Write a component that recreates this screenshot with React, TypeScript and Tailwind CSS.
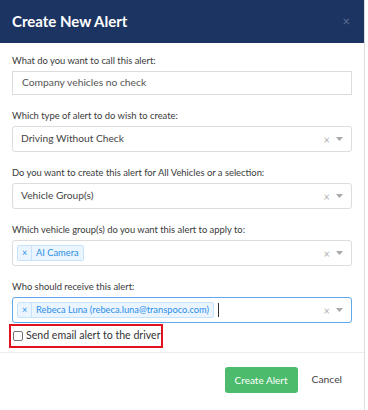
import type { ReactNode } from "react";

const font = { fontFamily: 'Lato, "Noto Sans", sans-serif' };

const Label = ({ children }: { children: ReactNode }) => (
  <div className="mb-[3px] text-[9.4px] leading-[14px] text-[#3a3a3a]">{children}</div>
);

const Caret = () => (
  <div className="flex items-center gap-[6px]">
    <span className="text-[11px] leading-none text-[#b3b3b3]">×</span>
    <svg width="7" height="4" viewBox="0 0 7 4">
      <path d="M0 0h7L3.5 4z" fill="#a8a8a8" />
    </svg>
  </div>
);

const Tag = ({ children }: { children: ReactNode }) => (
  <div className="flex h-[16px] items-stretch rounded-[2px] border border-[#c7e2fb] bg-[#ebf5ff] text-[9.3px] text-[#2a8ee8]">
    <span className="flex w-[14px] items-center justify-center border-r border-[#c7e2fb] text-[9px]">×</span>
    <span className="flex items-center px-[4px] leading-none">{children}</span>
  </div>
);

const SelectBox = ({ children, focused }: { children: ReactNode; focused?: boolean }) => (
  <div
    className={`flex h-[26px] items-center justify-between rounded-[3px] border pl-[4px] pr-[8px] ${
      focused ? "border-[#5fa8ee]" : "border-[#dcdcdc]"
    }`}
  >
    <div className="flex items-center">{children}</div>
    <Caret />
  </div>
);

export default function App() {
  return (
    <div className="h-[410px] w-[368px] bg-white" style={font}>
      <div className="flex h-[410px] w-[365px] flex-col border-r border-[#dedede]">
        <div className="flex h-[43px] items-center justify-between bg-[#1c3461] pl-[12px] pr-[14px]">
          <span className="text-[15px] font-bold text-white">Create New Alert</span>
          <span className="text-[13px] text-[#5d7195]">×</span>
        </div>
        <div className="flex flex-col gap-[14px] px-[12px] pt-[11px]">
          <div>
            <Label>What do you want to call this alert:</Label>
            <div className="flex h-[24px] items-center border border-[#dcdcdc] px-[9px] text-[10.3px] text-[#555]">
              Company vehicles no check
            </div>
          </div>
          <div>
            <Label>Which type of alert to do wish to create:</Label>
            <SelectBox>
              <span className="pl-[4px] text-[10.2px] text-[#444]">Driving Without Check</span>
            </SelectBox>
          </div>
          <div>
            <Label>Do you want to create this alert for All Vehicles or a selection:</Label>
            <SelectBox>
              <span className="pl-[4px] text-[10.2px] text-[#444]">Vehicle Group(s)</span>
            </SelectBox>
          </div>
          <div>
            <Label>Which vehicle group(s) do you want this alert to apply to:</Label>
            <SelectBox>
              <Tag>AI Camera</Tag>
            </SelectBox>
          </div>
          <div>
            <Label>Who should receive this alert:</Label>
            <SelectBox focused>
              <Tag>Rebeca Luna (rebeca.luna@transpoco.com)</Tag>
              <span className="ml-[4px] h-[14px] w-px bg-[#333]" />
            </SelectBox>
          </div>
        </div>
        <div className="ml-[9px] mt-[1px] flex h-[24px] w-[154px] items-center gap-[3px] border-2 border-[#e0121d] pl-[2px]">
          <span className="h-[10px] w-[10px] shrink-0 rounded-[2px] border border-[#777] bg-white" />
          <span className="whitespace-nowrap text-[10.6px] text-[#333]">Send email alert to the driver</span>
        </div>
        <div className="mt-[4px] h-px bg-[#e8edf2]" />
        <div className="flex items-center justify-end gap-[14px] pr-[22px] pt-[14px]">
          <button className="h-[26px] w-[73px] rounded-[3px] bg-[#4cbb6c] text-[10px] text-white">
            Create Alert
          </button>
          <span className="text-[10.3px] text-[#444]">Cancel</span>
        </div>
      </div>
    </div>
  );
}
